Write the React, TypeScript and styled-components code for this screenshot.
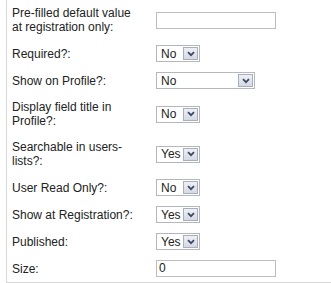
import styled, { createGlobalStyle } from "styled-components";

const GlobalStyle = createGlobalStyle`
  html, body {
    margin: 0;
    padding: 0;
    background: #fff;
  }
  body {
    font-family: "Liberation Sans", Arial, sans-serif;
    font-size: 12px;
    color: #222;
  }
`;

type FieldType = {
  label: string;
  kind: "text" | "select";
  value: string;
  width?: number;
};

const fields: FieldType[] = [
  { label: "Pre-filled default value at registration only:", kind: "text", value: "" },
  { label: "Required?:", kind: "select", value: "No" },
  { label: "Show on Profile?:", kind: "select", value: "No", width: 99 },
  { label: "Display field title in Profile?:", kind: "select", value: "No" },
  { label: "Searchable in users-lists?:", kind: "select", value: "Yes" },
  { label: "User Read Only?:", kind: "select", value: "No" },
  { label: "Show at Registration?:", kind: "select", value: "Yes" },
  { label: "Published:", kind: "select", value: "Yes" },
  { label: "Size:", kind: "text", value: "0" },
];

const Panel = styled.div`
  margin-left: 6px;
  padding-left: 5px;
  border-left: 1px solid #d8d8d8;
  border-bottom: 1px solid #d8d8d8;
`;

const Row = styled.div`
  display: grid;
  grid-template-columns: 144px 1fr;
  align-items: center;
  min-height: 27px;
  box-sizing: border-box;
  padding: 5px 0;
`;

const Label = styled.div`
  max-width: 126px;
  line-height: 14px;
  padding: 1px 0;
`;

const TextBox = styled.div`
  width: 120px;
  height: 17px;
  box-sizing: border-box;
  border: 1px solid #bdbdbd;
  background: #fff;
  padding-left: 2px;
  line-height: 15px;
  color: #222;
`;

const SelectBox = styled.div<{ $width: number }>`
  display: flex;
  align-items: center;
  justify-content: space-between;
  width: ${p => p.$width}px;
  height: 17px;
  box-sizing: border-box;
  border: 1px solid #b4b7bf;
  background: #fff;
  padding: 1px 1px 1px 4px;
`;

const SelectValue = styled.span`
  line-height: 14px;
  color: #222;
`;

const ArrowBtn = styled.div`
  display: flex;
  align-items: center;
  justify-content: center;
  width: 15px;
  height: 13px;
  box-sizing: border-box;
  border: 1px solid #a9aebb;
  background: linear-gradient(#eef0f5, #d5d9e3);
`;

function Chevron() {
  return (
    <svg width="8" height="6" viewBox="0 0 8 6">
      <path d="M1 1.2 L4 4.2 L7 1.2" fill="none" stroke="#3d4966" strokeWidth="1.8" />
    </svg>
  );
}

function App() {
  return (
    <>
      <GlobalStyle />
      <Panel>
        {fields.map(f => (
          <Row key={f.label}>
            <Label>{f.label}</Label>
            <div>
              {f.kind === "text" ? (
                <TextBox>{f.value}</TextBox>
              ) : (
                <SelectBox $width={f.width ?? 44}>
                  <SelectValue>{f.value}</SelectValue>
                  <ArrowBtn>
                    <Chevron />
                  </ArrowBtn>
                </SelectBox>
              )}
            </div>
          </Row>
        ))}
      </Panel>
    </>
  );
}

export default App;
